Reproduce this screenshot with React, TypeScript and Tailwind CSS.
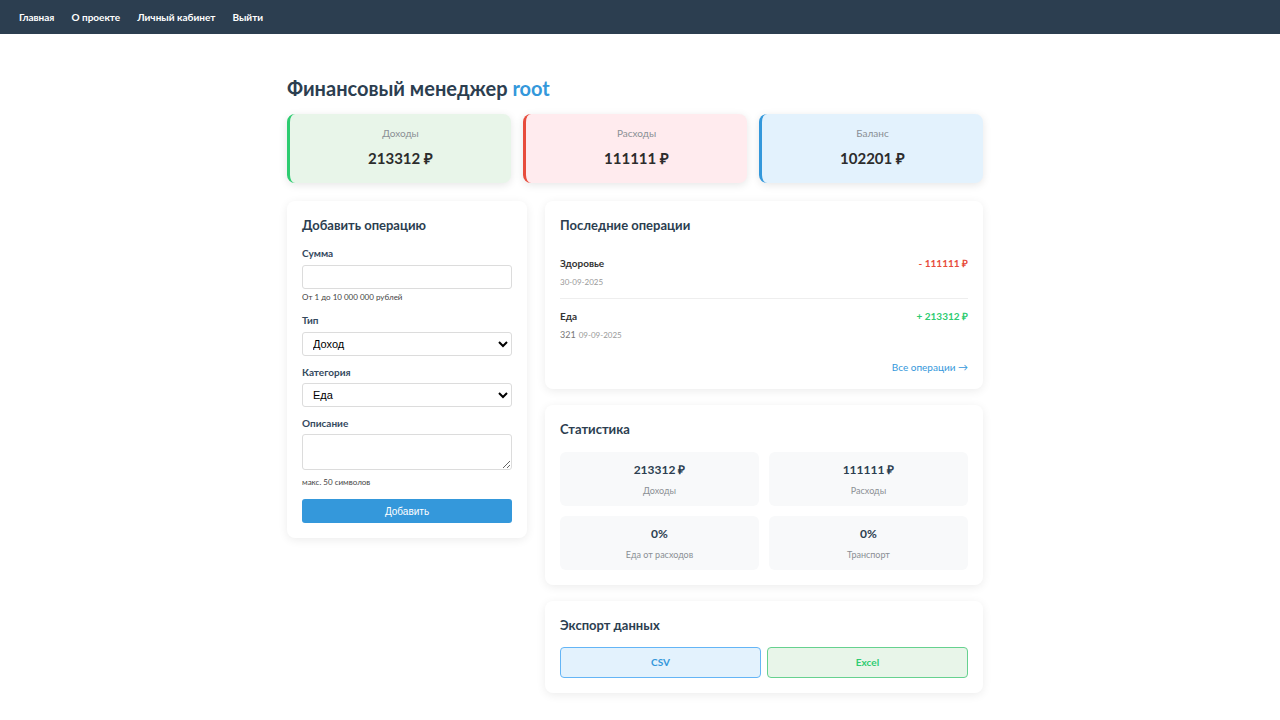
const ops = [
  { name: "Здоровье", note: "", date: "30-09-2025", amount: "- 111111 ₽", income: false },
  { name: "Еда", note: "321", date: "09-09-2025", amount: "+ 213312 ₽", income: true },
];

const stats = [
  { value: "213312 ₽", label: "Доходы" },
  { value: "111111 ₽", label: "Расходы" },
  { value: "0%", label: "Еда от расходов" },
  { value: "0%", label: "Транспорт" },
];

function SummaryCard({ label, value, tone }: { label: string; value: string; tone: string }) {
  return (
    <div className={`flex flex-col items-center rounded-lg border-l-[3px] pt-[13px] pb-[15px] shadow-[0_2px_8px_rgba(0,0,0,0.1)] ${tone}`}>
      <p className="text-[10px] leading-[13px] text-[#8a8f94]">{label}</p>
      <p className="mt-[8px] text-[15px] font-bold leading-[20px] text-[#2c2c2c]">{value}</p>
    </div>
  );
}

function Card({ title, children, className = "" }: { title: string; children: React.ReactNode; className?: string }) {
  return (
    <section className={`rounded-lg bg-white p-[15px] shadow-[0_2px_10px_rgba(0,0,0,0.08)] ${className}`}>
      <h2 className="text-[13px] font-bold leading-[18px] text-[#2c3e50]">{title}</h2>
      {children}
    </section>
  );
}

export default function App() {
  return (
    <div className="min-h-[730px] bg-white font-['Lato','Open_Sans',sans-serif] text-[#2c3e50]">
      <nav className="flex h-[34px] items-center gap-[17px] bg-[#2c3e50] px-[19px] text-[10px] font-bold text-white">
        <a>Главная</a>
        <a>О проекте</a>
        <a>Личный кабинет</a>
        <a>Выйти</a>
      </nav>

      <div className="pr-[10px]">
        <main className="mx-auto w-[696px] pt-[41px]">
          <h1 className="text-[20px] font-bold leading-[26px]">
            Финансовый менеджер <span className="text-[#3498db]">root</span>
          </h1>

          <div className="mt-[13px] grid grid-cols-3 gap-[12px]">
            <SummaryCard label="Доходы" value="213312 ₽" tone="border-[#2ecc71] bg-[#e8f5e9]" />
            <SummaryCard label="Расходы" value="111111 ₽" tone="border-[#e74c3c] bg-[#ffebee]" />
            <SummaryCard label="Баланс" value="102201 ₽" tone="border-[#3498db] bg-[#e3f2fd]" />
          </div>

          <div className="mt-[18px] flex items-start gap-[18px]">
            <Card title="Добавить операцию" className="w-[240px] shrink-0">
              <form className="mt-[13px] flex flex-col text-[10px] leading-[13px]">
                <label className="font-bold text-[#34495e]">Сумма</label>
                <input className="mt-[5px] h-[24px] rounded-[3px] border border-[#dcdcdc] px-2" />
                <span className="mt-[3px] text-[8px] leading-[11px] text-[#444]">От 1 до 10 000 000 рублей</span>

                <label className="mt-[11px] font-bold text-[#34495e]">Тип</label>
                <select className="mt-[5px] h-[24px] rounded-[3px] border border-[#dcdcdc] px-[6px] font-['Liberation_Sans',sans-serif] text-[11px] text-black">
                  <option>Доход</option>
                  <option>Расход</option>
                </select>

                <label className="mt-[10px] font-bold text-[#34495e]">Категория</label>
                <select className="mt-[4px] h-[24px] rounded-[3px] border border-[#dcdcdc] px-[6px] font-['Liberation_Sans',sans-serif] text-[11px] text-black">
                  <option>Еда</option>
                  <option>Транспорт</option>
                  <option>Здоровье</option>
                </select>

                <label className="mt-[10px] font-bold text-[#34495e]">Описание</label>
                <textarea className="mt-[4px] h-[36px] rounded-[3px] border border-[#dcdcdc] px-2" />
                <span className="mt-[7px] text-[8px] leading-[11px] text-[#444]">макс. 50 символов</span>

                <button type="button" className="mt-[11px] h-[24px] rounded-[3px] bg-[#3498db] font-['Liberation_Sans',sans-serif] text-[10px] text-white">
                  Добавить
                </button>
              </form>
            </Card>

            <div className="flex flex-1 flex-col gap-[16px]">
              <Card title="Последние операции">
                <ul className="mt-[12px]">
                  {ops.map((op, i) => (
                    <li key={op.name} className={`flex justify-between pt-[11px] pb-[10px] ${i === 0 ? "border-b border-[#eeeeee]" : ""}`}>
                      <div>
                        <p className="text-[10px] font-bold leading-[13px] text-[#333]">{op.name}</p>
                        <p className="mt-[6px] text-[8px] leading-[12px] text-[#999]">
                          {op.note && <span className="mr-[3px] text-[9px] text-[#777]">{op.note}</span>}
                          {op.date}
                        </p>
                      </div>
                      <p className={`text-[10px] font-bold leading-[13px] ${op.income ? "text-[#2ecc71]" : "text-[#e74c3c]"}`}>{op.amount}</p>
                    </li>
                  ))}
                </ul>
                <div className="mt-[10px] flex justify-end">
                  <a className="text-[10px] leading-[13px] text-[#3498db]">Все операции →</a>
                </div>
              </Card>

              <Card title="Статистика">
                <div className="mt-[14px] grid grid-cols-2 gap-[10px]">
                  {stats.map((s) => (
                    <div key={s.label} className="flex h-[54px] flex-col items-center justify-center rounded-md bg-[#f8f9fa]">
                      <p className="text-[12px] font-bold leading-[17px] text-[#2c3e50]">{s.value}</p>
                      <p className="mt-[7px] text-[9px] leading-[12px] text-[#8a8f94]">{s.label}</p>
                    </div>
                  ))}
                </div>
              </Card>

              <Card title="Экспорт данных">
                <div className="mt-[13px] grid grid-cols-2 gap-[6px]">
                  <button className="h-[31px] rounded-[4px] border border-[#64b5f6] bg-[#e3f2fd] text-[10px] font-bold text-[#3498db]">CSV</button>
                  <button className="h-[31px] rounded-[4px] border border-[#66d18f] bg-[#e8f5e9] text-[10px] font-bold text-[#2ecc71]">Excel</button>
                </div>
              </Card>
            </div>
          </div>
        </main>
      </div>
    </div>
  );
}
